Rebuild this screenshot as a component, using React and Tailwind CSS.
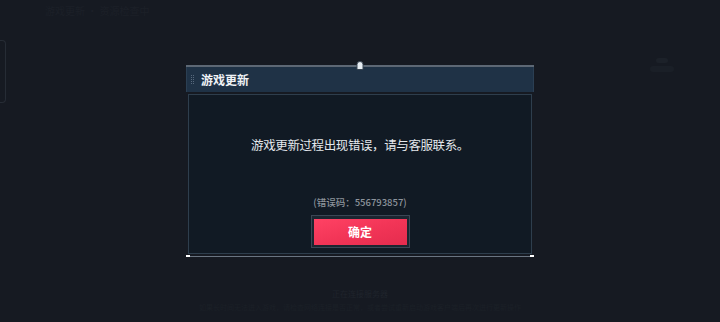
import React from "react";

const font = { fontFamily: '"Noto Sans CJK SC", "Noto Sans", sans-serif' };

const GripDots = () => (
    <div className="grid grid-cols-2 gap-[1px] opacity-60">
        {Array.from({ length: 10 }).map((_, i) => (
            <span key={i} className="w-[1px] h-[1px] bg-[#7d8fa3]" />
        ))}
    </div>
);

const UpdateDialog = () => (
    <div className="relative w-[348px] flex flex-col">
        {/* top rail + marker */}
        <div className="relative h-[2px] bg-[#5d6875]">
            <div className="absolute left-1/2 -translate-x-1/2 -top-[4px] w-[7px] h-[9px] rounded-t-full bg-[#e8eef4] border border-[#3a4653]" />
        </div>

        {/* header */}
        <div className="h-[25px] bg-[#1f3246] flex items-center pl-[4px] gap-[7px] border-x border-[#2b3f53]">
            <GripDots />
            <span className="text-[12px] font-semibold text-[#f0f3f6] leading-none">游戏更新</span>
        </div>

        {/* body */}
        <div className="mx-[2px] mt-[2px] h-[160px] border border-[#2e3e4d] bg-[#111a24] flex flex-col items-center">
            <p className="mt-[44px] text-[12.5px] text-[#e4e8ec] leading-none tracking-[-0.4px]">
                游戏更新过程出现错误，请与客服联系。
            </p>
            <p className="mt-[46px] text-[9.5px] font-medium text-[#8d949c] leading-none">(错误码：556793857)</p>
            <div className="mt-[8px] p-[2px] bg-[#1c2530] border border-[#3a4654]">
                <button className="w-[93px] h-[26px] bg-gradient-to-br from-[#ff4264] via-[#f23557] to-[#e52c4e] text-white text-[12px] font-bold leading-none">
                    确定
                </button>
            </div>
        </div>

        {/* bottom rail with caps */}
        <div className="mt-[2px] relative h-[1px] bg-[#6a7582]">
            <span className="absolute left-0 -top-[1px] w-[4px] h-[2px] bg-white" />
            <span className="absolute right-0 -top-[1px] w-[4px] h-[2px] bg-white" />
        </div>
    </div>
);

export default function App() {
    return (
        <div className="relative w-[720px] h-[322px] bg-[#161a22] overflow-hidden" style={font}>
            {/* faint background page */}
            <div className="absolute left-[45px] top-[3px] text-[10px] text-[#1c2028]">游戏更新 · 资源检查中</div>
            <div className="absolute left-0 top-[40px] w-[6px] h-[63px] rounded-r-[4px] border border-l-0 border-[#262c35]" />
            <div className="absolute right-[46px] top-[58px] flex flex-col items-center gap-[3px]">
                <span className="w-[12px] h-[5px] rounded-sm bg-[#1c2129]" />
                <span className="w-[24px] h-[6px] rounded-sm bg-[#1a1f27]" />
            </div>
            <div className="absolute inset-x-0 top-[288px] flex flex-col items-center gap-[2px]">
                <span className="text-[8px] text-[#1f242c]">正在连接服务器</span>
                <span className="text-[7px] text-[#1b2027] whitespace-nowrap">
                    如果长时间无法进入游戏，请检查网络连接是否正常，或者尝试重新启动游戏客户端后再次进行更新操作
                </span>
            </div>

            {/* modal */}
            <div className="absolute inset-0 flex items-center justify-center">
                <UpdateDialog />
            </div>
        </div>
    );
}
